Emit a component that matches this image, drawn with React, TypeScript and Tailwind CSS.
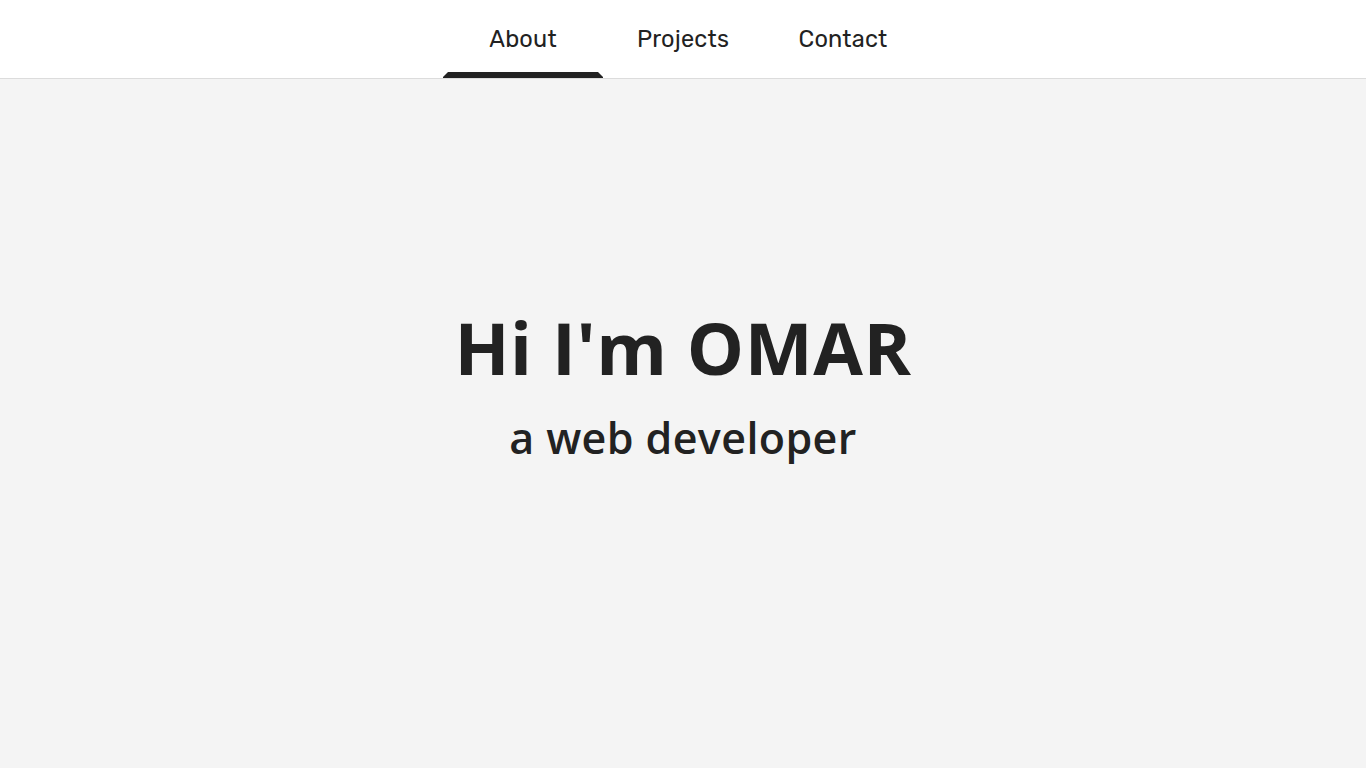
import { useState } from "react";

const TABS = ["About", "Projects", "Contact"];

function NavTab({
  label,
  selected,
  onClick,
}: {
  label: string;
  selected: boolean;
  onClick: () => void;
}) {
  return (
    <li className="relative w-[160px] h-full">
      <a
        className="flex h-full items-center justify-center cursor-pointer text-[23.5px] tracking-[0.2px] text-[#222] pt-[1px]"
        onClick={onClick}
      >
        {label}
      </a>
      {selected && (
        <svg
          className="absolute bottom-0 left-0"
          width="160"
          height="6"
          viewBox="0 0 160 6"
        >
          <path d="M5 0 H155 L160 5 V6 H0 V5 Z" fill="#222" />
        </svg>
      )}
    </li>
  );
}

export default function App() {
  const [tab, setTab] = useState("About");

  return (
    <div className="min-h-screen flex flex-col bg-[#f4f4f4] font-['Rubik','Inter','Noto_Sans',sans-serif]">
      <header className="bg-white border-b border-[#dcdcdc] h-[79px]">
        <nav className="h-[78px] flex justify-center">
          <ul className="flex h-full">
            {TABS.map((t) => (
              <NavTab
                key={t}
                label={t}
                selected={tab === t}
                onClick={() => setTab(t)}
              />
            ))}
          </ul>
        </nav>
      </header>
      <main className="flex-1 flex flex-col items-center pt-[232px] text-[#222]">
        <h1 className="font-['Open_Sans',sans-serif] font-bold text-[72px] leading-none tracking-[0.6px]">
          Hi I'm OMAR
        </h1>
        <h2 className="mt-[33px] font-['Open_Sans',sans-serif] font-semibold text-[43px] leading-none tracking-[0.4px]">
          a web developer
        </h2>
      </main>
    </div>
  );
}
